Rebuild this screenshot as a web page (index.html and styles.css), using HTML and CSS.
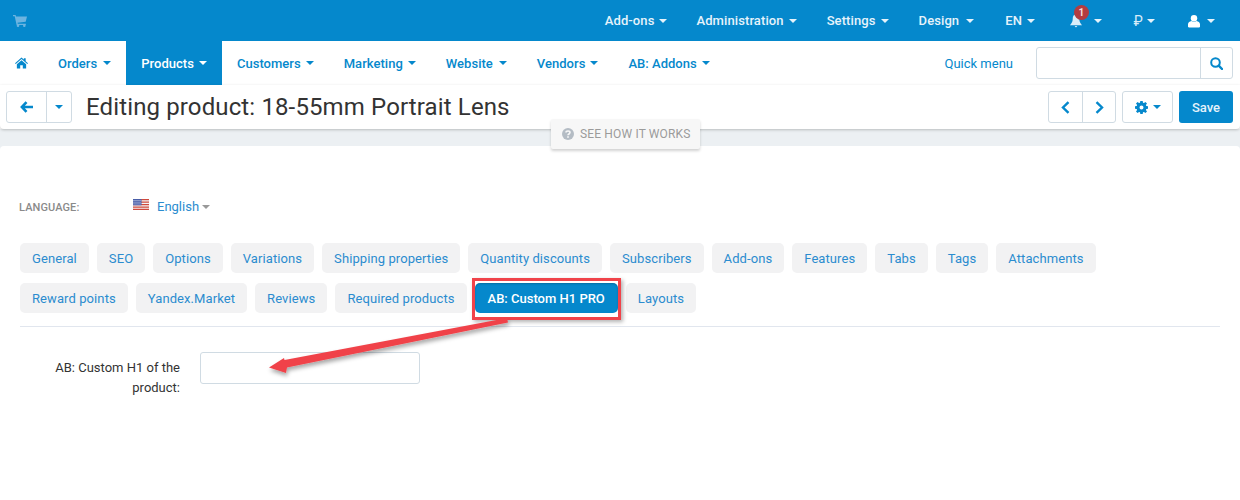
FILE: index.html
```html
<!DOCTYPE html>
<html lang="en">
<head>
    <meta charset="UTF-8">
    <title>Editing product: 18-55mm Portrait Lens</title>
    <link rel="stylesheet" href="styles.css">
</head>
<body>
    <div class="topbar">
        <svg class="cart" width="14" height="13" viewBox="0 0 14 13"><path fill="#6db4e0" d="M0 1h2.600l.4 1.400H14l-1.300 5.400-8.200.9.3 1h8v1.200H3.600L1.700 2.300H0z"/><circle cx="5" cy="11.700" r="1.300" fill="#6db4e0"/><circle cx="11.300" cy="11.700" r="1.300" fill="#6db4e0"/></svg>
        <div class="topbar-menu">
            <a class="top-item top-addons">Add-ons <i class="caret"></i></a>
            <a class="top-item">Administration <i class="caret"></i></a>
            <a class="top-item">Settings <i class="caret"></i></a>
            <a class="top-item top-design">Design <i class="caret"></i></a>
            <a class="top-item top-en">EN <i class="caret"></i></a>
            <a class="top-item top-bell">
                <svg width="14" height="15" viewBox="0 0 15 15"><path fill="#d9edf9" d="M7.500 1C4.800 1 4 3 4 6c0 3-1.500 5-3 6.500h13C12.500 11 11 9 11 6c0-3-.8-5-3.500-5zM6 13.300h3L7.500 15z"/></svg>
                <span class="badge">1</span>
                <i class="caret"></i>
            </a>
            <a class="top-item top-rub"><span class="rub">₽</span> <i class="caret"></i></a>
            <a class="top-item top-user">
                <svg width="12" height="14" viewBox="0 0 13 14"><circle cx="6.500" cy="4" r="3.500" fill="#fff"/><path fill="#fff" d="M0 13v-2.500C0 8.500 2 7.500 3.500 7c1.800 1.200 4.200 1.200 6 0 1.500.5 3.500 1.500 3.500 3.500V13c0 .6-.5 1-1 1H1c-.5 0-1-.4-1-1z"/></svg>
                <i class="caret"></i>
            </a>
        </div>
    </div>

    <div class="navbar">
        <a class="nav-item nav-home">
            <svg width="13" height="12" viewBox="0 0 14 12"><path fill="#0588cc" d="M7 0l2.500 2.200V.8h2v3.200L14 6.200l-.8.9L7 1.700.8 7.100 0 6.200zM2 7.400L7 3l5 4.400V12H8.400V8.500H5.600V12H2z"/></svg>
        </a>
        <a class="nav-item nav-orders">Orders <i class="caret"></i></a>
        <a class="nav-item active">Products <i class="caret"></i></a>
        <a class="nav-item">Customers <i class="caret"></i></a>
        <a class="nav-item">Marketing <i class="caret"></i></a>
        <a class="nav-item nav-website">Website <i class="caret"></i></a>
        <a class="nav-item">Vendors <i class="caret"></i></a>
        <a class="nav-item">AB: Addons <i class="caret"></i></a>
        <a class="quick-menu">Quick menu</a>
        <div class="search">
            <div class="search-input"></div>
            <div class="search-btn">
                <svg width="13" height="13" viewBox="0 0 13 13"><circle cx="5.500" cy="5.500" r="4.300" fill="none" stroke="#0588cc" stroke-width="2"/><path d="M8.700 8.700L12 12" stroke="#0588cc" stroke-width="2.400" stroke-linecap="round"/></svg>
            </div>
        </div>
    </div>

    <div class="toolbar">
        <div class="btn-group">
            <a class="btn btn-back">
                <svg width="13" height="12" viewBox="0 0 13 12"><path fill="none" stroke="#0588cc" stroke-width="2.600" d="M6.500 1.200L1.900 6l4.600 4.800M2 6h11"/></svg>
            </a>
            <a class="btn btn-drop"><i class="caret"></i></a>
        </div>
        <h1>Editing product: 18-55mm Portrait Lens</h1>
        <div class="toolbar-right">
            <div class="btn-group">
                <a class="btn btn-arrow">
                    <svg width="9" height="13" viewBox="0 0 9 13"><path fill="none" stroke="#0588cc" stroke-width="2.400" d="M7.500 1.200L2 6.500l5.500 5.300"/></svg>
                </a>
                <a class="btn btn-arrow">
                    <svg width="9" height="13" viewBox="0 0 9 13"><path fill="none" stroke="#0588cc" stroke-width="2.400" d="M1.500 1.200L7 6.500l-5.500 5.300"/></svg>
                </a>
            </div>
            <a class="btn btn-gear">
                <svg width="13" height="13" viewBox="0 0 13 13"><path fill="#0588cc" fill-rule="evenodd" d="M5.300 0h2.400l.3 1.700 1 .4L10.400 1l1.600 1.600-1.100 1.400.4 1 1.700.3v2.400l-1.700.3-.4 1L12 10.400 10.400 12 9 10.900l-1 .4-.3 1.700H5.300L5 11.300l-1-.4L2.600 12 1 10.400l1.100-1.400-.4-1L0 7.700V5.300L1.700 5l.4-1L1 2.600 2.600 1 4 2.100l1-.4zM6.500 4.500a2 2 0 100 4 2 2 0 000-4z"/></svg>
                <i class="caret"></i>
            </a>
            <a class="btn-save">Save</a>
        </div>
    </div>

    <div class="page">
        <div class="content">
            <div class="language">
                <span class="language-label">LANGUAGE:</span>
                <svg class="flag" width="16" height="11" viewBox="0 0 16 11"><rect width="16" height="11" fill="#f4f4f4"/><path fill="#cf4a3d" d="M0 0h16v1.300H0zM0 2.500h16v1.300H0zM0 5h16v1.300H0zM0 7.500h16v1.300H0zM0 9.800h16V11H0z"/><rect width="8.500" height="6.300" fill="#4a5ea8"/><path stroke="#cfd6ec" stroke-dasharray="1 1" d="M.5 1.500h7M.5 3.200h7M.5 4.900h7"/></svg>
                <a class="language-link">English <i class="caret caret-grey"></i></a>
            </div>

            <div class="tabs">
                <div class="tab-row">
                    <a class="tab">General</a>
                    <a class="tab">SEO</a>
                    <a class="tab">Options</a>
                    <a class="tab">Variations</a>
                    <a class="tab">Shipping properties</a>
                    <a class="tab">Quantity discounts</a>
                    <a class="tab">Subscribers</a>
                    <a class="tab">Add-ons</a>
                    <a class="tab">Features</a>
                    <a class="tab">Tabs</a>
                    <a class="tab">Tags</a>
                    <a class="tab">Attachments</a>
                </div>
                <div class="tab-row">
                    <a class="tab">Reward points</a>
                    <a class="tab">Yandex.Market</a>
                    <a class="tab">Reviews</a>
                    <a class="tab">Required products</a>
                    <a class="tab tab-active">AB: Custom H1 PRO</a>
                    <a class="tab">Layouts</a>
                </div>
            </div>

            <div class="field">
                <label class="field-label">AB: Custom H1 of the product:</label>
                <div class="field-input"></div>
            </div>
        </div>
    </div>

    <a class="how-it-works">
        <svg width="12" height="12" viewBox="0 0 12 12"><circle cx="6" cy="6" r="6" fill="#b4bcc4"/><path fill="none" stroke="#f7f7f7" stroke-width="1.600" d="M4 4.600C4 3.400 5 3 6 3s2 .6 2 1.600C8 6 6 6 6 7.300"/><rect x="5.200" y="8.200" width="1.600" height="1.600" fill="#f7f7f7"/></svg>
        SEE HOW IT WORKS
    </a>

    <!-- red annotations drawn over the screenshot -->
    <div class="highlight"></div>
    <svg class="arrow" width="260" height="70" viewBox="260 310 260 70">
        <defs>
            <filter id="arrowShadow" x="-10%" y="-30%" width="120%" height="170%">
                <feDropShadow dx="1" dy="3" stdDeviation="2" flood-color="#000" flood-opacity="0.35"/>
            </filter>
        </defs>
        <path filter="url(#arrowShadow)" fill="#f0434a" d="M269 367.500L284 358 284.500 360 507 318 508 322.500 287 367.500 286 373z"/>
    </svg>
</body>
</html>
```

FILE: styles.css
```css
* {
    box-sizing: border-box;
}
body {
    margin: 0;
    height: 500px;
    overflow: hidden;
    position: relative;
    font-family: Roboto, Arial, sans-serif;
    font-size: 13px;
    color: #333;
    background: #fff;
}
a {
    cursor: pointer;
}
.caret {
    display: inline-block;
    width: 0;
    height: 0;
    margin-left: 2px;
    vertical-align: middle;
    border-top: 4px solid currentColor;
    border-left: 4px solid transparent;
    border-right: 4px solid transparent;
}
.caret-grey {
    color: #999;
    margin-left: 0;
}

.topbar {
    height: 41px;
    background: #0588cc;
    display: flex;
    align-items: center;
    padding: 0 14px 0 13px;
}
.topbar-menu {
    margin-left: auto;
    display: flex;
    align-items: center;
}
.top-item {
    color: #e6f3fb;
    font-weight: 500;
    letter-spacing: 0.1px;
    margin-right: 30px;
    display: flex;
    align-items: center;
    gap: 3px;
    position: relative;
}
.top-addons {
    margin-right: 29px;
}
.top-design {
    margin-right: 31px;
    gap: 5px;
}
.top-en {
    margin-right: 34px;
}
.top-bell {
    margin-right: 29px;
    gap: 9px;
}
.top-rub {
    margin-right: 33px;
    gap: 2px;
}
.top-user {
    margin-right: 11px;
    gap: 5px;
}
.rub {
    width: 12px;
    font-size: 14px;
    font-weight: 400;
    text-align: right;
    color: #d9edf9;
}
.badge {
    position: absolute;
    left: 5px;
    top: -8px;
    width: 15px;
    height: 15px;
    border-radius: 50%;
    background: #b23c40;
    color: #f3dcdc;
    font-size: 10px;
    font-weight: 700;
    line-height: 15px;
    text-align: center;
}

.navbar {
    height: 44px;
    display: flex;
    align-items: center;
    padding-right: 7px;
}
.nav-item {
    height: 44px;
    padding: 0 15px;
    color: #0588cc;
    font-weight: 500;
    letter-spacing: 0.03px;
    display: flex;
    align-items: center;
    gap: 3px;
}
.nav-orders,
.nav-website {
    gap: 4px;
}
.nav-item.active {
    background: #0588cc;
    color: #fff;
}
.quick-menu {
    margin-left: auto;
    margin-right: 23px;
    color: #0588cc;
}
.search {
    width: 197px;
    height: 32px;
    display: flex;
    border: 1px solid #d0dbe3;
    border-radius: 3px;
}
.search-input {
    flex: 1;
}
.search-btn {
    width: 32px;
    border-left: 1px solid #d0dbe3;
    display: flex;
    align-items: center;
    justify-content: center;
}

.toolbar {
    height: 44px;
    padding: 6px 7px 0 6px;
    display: flex;
    align-items: flex-start;
    border-radius: 0 0 4px 4px;
    box-shadow: 0 1px 3px rgba(0, 0, 0, 0.22);
    position: relative;
    background: #fff;
}
.toolbar h1 {
    margin: 0 0 0 14px;
    font-size: 24px;
    font-weight: 400;
    letter-spacing: 0.13px;
    line-height: 32px;
    color: #333;
}
.toolbar-right {
    margin-left: auto;
    display: flex;
    gap: 6px;
}
.btn-group {
    display: flex;
    border: 1px solid #d0dbe3;
    border-radius: 3px;
    height: 32px;
}
.btn {
    display: flex;
    align-items: center;
    justify-content: center;
    color: #0588cc;
}
.btn + .btn {
    border-left: 1px solid #d0dbe3;
}
.btn-back {
    width: 39px;
}
.btn-drop {
    width: 25px;
}
.btn-drop .caret {
    margin: 0;
}
.btn-arrow {
    width: 33px;
}
.btn-gear {
    width: 51px;
    height: 32px;
    gap: 3px;
    border: 1px solid #d0dbe3;
    border-radius: 3px;
}
.btn-save {
    width: 54px;
    height: 32px;
    background: #0588cc;
    color: #e6f3fb;
    font-weight: 500;
    border-radius: 3px;
    display: flex;
    align-items: center;
    justify-content: center;
}

.page {
    padding-top: 17px;
    background: #ecf0f3;
}
.content {
    height: 354px;
    border-radius: 4px 4px 0 0;
    padding: 51px 20px 0 20px;
    background: #fff;
}
.language {
    display: flex;
    align-items: center;
    height: 18px;
}
.language-label {
    width: 113px;
    margin-left: -1px;
    margin-right: 1px;
    margin-top: 2px;
    font-size: 11px;
    font-weight: 500;
    letter-spacing: 0.1px;
    color: #8a8a8a;
}
.flag {
    margin-right: 8px;
    margin-top: -3px;
}
.language-link {
    color: #2b8ccf;
}

.tabs {
    margin-top: 28px;
    padding-bottom: 13px;
    display: flex;
    flex-direction: column;
    gap: 10px;
    border-bottom: 1px solid #e1e6ee;
}
.tab-row {
    display: flex;
    gap: 8px;
}
.tab {
    height: 30px;
    padding: 0 12px;
    background: #f2f2f3;
    border-radius: 5px;
    color: #2b8ccf;
    letter-spacing: 0.09px;
    line-height: 31px;
}
.tab-active {
    padding: 0 13px;
    background: #0588cc;
    color: #fff;
    font-weight: 500;
    letter-spacing: 0;
    box-shadow: inset 0 1px 2px rgba(0, 0, 0, 0.2);
}

.field {
    margin-top: 25px;
    display: flex;
    align-items: flex-start;
}
.field-label {
    width: 160px;
    padding-top: 6px;
    text-align: right;
    line-height: 20px;
    color: #333;
}
.field-input {
    width: 220px;
    height: 32px;
    margin-left: 20px;
    border: 1px solid #d0dbe3;
    border-radius: 3px;
}

.how-it-works {
    position: absolute;
    left: 551px;
    top: 119px;
    width: 149px;
    height: 30px;
    background: #f7f7f7;
    box-shadow: 0 2px 3px rgba(0, 0, 0, 0.18);
    border-radius: 2px;
    color: #9b9b9b;
    font-size: 12px;
    letter-spacing: 0.15px;
    display: flex;
    align-items: center;
    gap: 6px;
    padding-left: 11px;
}

.highlight {
    position: absolute;
    left: 472px;
    top: 278px;
    width: 149px;
    height: 42px;
    border: 3px solid #f0434a;
    box-shadow: 2px 2px 4px rgba(0, 0, 0, 0.3);
}
.arrow {
    position: absolute;
    left: 260px;
    top: 310px;
}
```
